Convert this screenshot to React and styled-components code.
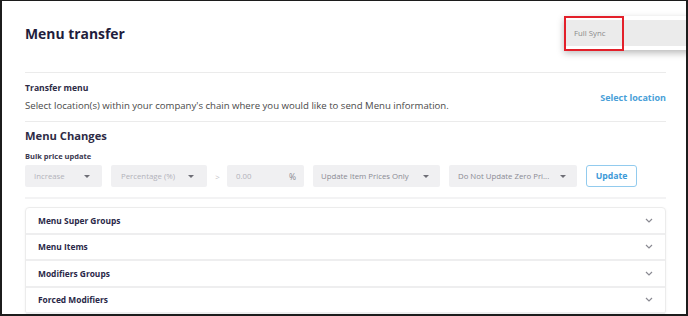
import React from 'react'
import styled, { createGlobalStyle } from 'styled-components'

const GlobalStyle = createGlobalStyle`
  html, body { margin: 0; padding: 0; background: #fff; }
  body { font-family: "Open Sans", "Noto Sans", Arial, sans-serif; }
  * { box-sizing: border-box; }
`

const Frame = styled.div`
  position: relative;
  width: 688px;
  height: 316px;
  border: 2px solid #1c1c1c;
  border-top-width: 1px;
  overflow: hidden;
  background: #fff;
`

const Content = styled.div`
  padding: 0 20px 0 23px;
`

const Header = styled.div`
  height: 71px;
  padding-top: 22px;
`

const Title = styled.h1`
  margin: 0;
  font-size: 13.9px;
  line-height: 22px;
  font-weight: 700;
  color: #1f1d3d;
`

const Divider = styled.div`
  height: ${({ $thick }) => ($thick ? '2px' : '1px')};
  background: ${({ $thick }) => ($thick ? '#f3f3f4' : '#ebebeb')};
`

const TransferRow = styled.div`
  height: 48px;
  display: flex;
  align-items: center;
  justify-content: space-between;
`

const TransferText = styled.div`
  display: flex;
  flex-direction: column;
  gap: 4px;
`

const Label = styled.div`
  font-size: 8.6px;
  line-height: 14px;
  font-weight: 700;
  color: #2d2b45;
`

const Description = styled.div`
  font-size: 9.6px;
  line-height: 14px;
  color: #4a4a4a;
`

const LinkText = styled.a`
  font-size: 9px;
  font-weight: 700;
  color: #4a9fd8;
  text-decoration: none;
`

const ChangesSection = styled.div`
  padding-top: 5px;
`

const SectionTitle = styled.h2`
  margin: 0;
  font-size: 11.2px;
  line-height: 18px;
  font-weight: 700;
  color: #2d2b45;
`

const SubLabel = styled.div`
  margin-top: 5px;
  font-size: 7.5px;
  line-height: 12px;
  font-weight: 700;
  color: #3a3850;
`

const Controls = styled.div`
  margin-top: 3px;
  display: flex;
  align-items: center;
  gap: 9px;
  height: 22px;
`

const Select = styled.div`
  width: ${({ $w }) => $w}px;
  height: 22px;
  background: #f0f0f2;
  border-radius: 2px;
  display: flex;
  align-items: center;
  justify-content: space-between;
  padding: 0 ${({ $pr }) => $pr || 12}px 0 ${({ $pl }) => $pl || 9}px;
  font-size: 7.8px;
  color: ${({ $dim }) => ($dim ? '#b2b2ba' : '#8a8a92')};
  white-space: nowrap;
`

const Caret = styled.span`
  width: 0;
  height: 0;
  border-left: 3px solid transparent;
  border-right: 3px solid transparent;
  border-top: 3px solid #6e6e76;
`

const Arrow = styled.span`
  font-size: 8px;
  color: #c4c4c8;
  width: 11px;
  text-align: center;
  margin: 0 -5px 0 -4px;
`

const Unit = styled.span`
  color: #888890;
  font-size: 8.5px;
`

const UpdateButton = styled.button`
  width: 51px;
  height: 22px;
  border: 1px solid #92cbee;
  border-radius: 3px;
  background: #fff;
  color: #3d9ad8;
  font-family: inherit;
  font-size: 8.7px;
  font-weight: 700;
  padding: 0;
`

const Card = styled.div`
  margin-top: 8px;
  border: 1px solid #ececec;
  border-radius: 4px;
  box-shadow: 0 1px 3px rgba(0, 0, 0, 0.05);
`

const AccordionRow = styled.div`
  height: 26.5px;
  border-bottom: 2px solid #eeeeef;
  display: flex;
  align-items: center;
  justify-content: space-between;
  padding: 0 12px 0 12px;
`

const RowTitle = styled.span`
  font-size: 8.4px;
  font-weight: 700;
  color: #2a2848;
`

const Popup = styled.div`
  position: absolute;
  top: 15px;
  left: 562px;
  width: 140px;
  height: 34px;
  background: #fff;
  box-shadow: 0 3px 7px rgba(0, 0, 0, 0.28);
  padding: 4px 0;
`

const PopupItem = styled.div`
  height: 26px;
  background: #ebebeb;
  display: flex;
  align-items: center;
  padding-left: 10px;
  font-size: 7.8px;
  color: #8a8a8a;
`

const Highlight = styled.div`
  position: absolute;
  top: 15px;
  left: 562px;
  width: 60px;
  height: 35px;
  border: 2px solid #e3202a;
`

const Chevron = () => (
  <svg width="8" height="5" viewBox="0 0 8 5">
    <path d="M1 1 L4 4 L7 1" fill="none" stroke="#8a8a92" strokeWidth="1.2" />
  </svg>
)

const sections = ['Menu Super Groups', 'Menu Items', 'Modifiers Groups', 'Forced Modifiers']

export default function App() {
  return (
    <>
      <GlobalStyle />
      <Frame>
        <Content>
          <Header>
            <Title>Menu transfer</Title>
          </Header>
          <Divider />
          <TransferRow>
            <TransferText>
              <Label>Transfer menu</Label>
              <Description>
                Select location(s) within your company's chain where you would like to send Menu information.
              </Description>
            </TransferText>
            <LinkText href="#">Select location</LinkText>
          </TransferRow>
          <Divider />
          <ChangesSection>
            <SectionTitle>Menu Changes</SectionTitle>
            <SubLabel>Bulk price update</SubLabel>
            <Controls>
              <Select $w={77} $dim>
                Increase <Caret />
              </Select>
              <Select $w={96} $dim $pl={10} $pr={13}>
                Percentage (%) <Caret />
              </Select>
              <Arrow>&gt;</Arrow>
              <Select $w={77} $dim $pr={8}>
                0.00 <Unit>%</Unit>
              </Select>
              <Select $w={127} $pl={8} $pr={11}>
                Update Item Prices Only <Caret />
              </Select>
              <Select $w={128} $pr={11}>
                Do Not Update Zero Pri... <Caret />
              </Select>
              <UpdateButton>Update</UpdateButton>
            </Controls>
          </ChangesSection>
          <Divider $thick style={{ marginTop: 10 }} />
          <Card>
            {sections.map((s) => (
              <AccordionRow key={s}>
                <RowTitle>{s}</RowTitle>
                <Chevron />
              </AccordionRow>
            ))}
          </Card>
        </Content>
        <Popup>
          <PopupItem>Full Sync</PopupItem>
        </Popup>
        <Highlight />
      </Frame>
    </>
  )
}
